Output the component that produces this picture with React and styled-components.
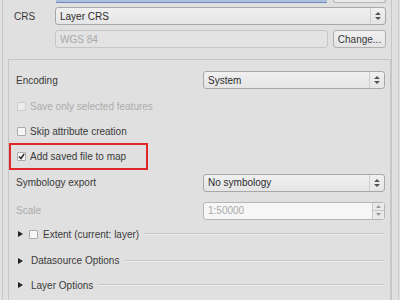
import styled, { createGlobalStyle } from "styled-components";

const GlobalStyle = createGlobalStyle`
  body {
    margin: 0;
    background: #e0e0e0;
    font-family: "Liberation Sans", Arial, sans-serif;
    font-size: 10px;
    color: #333;
  }
`;

const Page = styled.div`
  display: flex;
  width: 400px;
  height: 300px;
  overflow: hidden;
  background: #e0e0e0;
`;

const Frame = styled.div`
  display: flex;
  flex-direction: column;
  width: 388px;
  margin-left: 2px;
  border-left: 1px solid #c6c6c6;
  border-right: 1px solid #c6c6c6;
`;

const OuterEdge = styled.div`
  width: 1px;
  margin-left: 6px;
  background: #cbcbcb;
`;

const TopStrip = styled.div`
  display: flex;
  gap: 6px;
  height: 3px;
  padding-left: 53px;
`;

const FocusedFieldEnd = styled.div`
  width: 271px;
  background: #aebfdd;
  border-bottom: 1px solid #6e8cc2;
`;

const ButtonEnd = styled.div`
  width: 51px;
  background: #e9e9e9;
  border: 1px solid #b3b3b3;
  border-top: none;
  border-radius: 0 0 3px 3px;
`;

const FormRow = styled.div`
  display: flex;
  align-items: center;
  height: 18px;
  margin-top: ${(p) => p.$top}px;
  padding-left: ${(p) => p.$indent || 0}px;
`;

const SideLabel = styled.div`
  width: 41px;
  padding-left: 11px;
  color: #3a3a3a;
`;

const Combo = styled.div`
  display: flex;
  align-items: stretch;
  box-sizing: border-box;
  width: ${(p) => p.$width}px;
  height: 18px;
  border: 1px solid #a8a8a8;
  border-radius: 3px;
  background: linear-gradient(#f0f0f0, #e5e5e5);
  color: #2b2b2b;
`;

const ComboText = styled.div`
  flex: 1;
  display: flex;
  align-items: center;
  padding-left: 4px;
`;

const ComboArrow = styled.div`
  display: flex;
  align-items: center;
  justify-content: center;
  width: 14px;
  border-left: 1px solid #cfcfcf;
`;

const Field = styled.div`
  display: flex;
  align-items: center;
  box-sizing: border-box;
  width: ${(p) => p.$width}px;
  height: 18px;
  padding-left: 4px;
  border: 1px solid #c6c6c6;
  border-radius: 3px;
  background: ${(p) => (p.$light ? "#f6f6f6" : "#e3e3e3")};
  color: #a9a9a9;
`;

const Button = styled.div`
  display: flex;
  align-items: center;
  justify-content: center;
  box-sizing: border-box;
  width: 53px;
  height: 18px;
  margin-left: 5px;
  border: 1px solid #b0b0b0;
  border-radius: 3px;
  background: linear-gradient(#f0f0f0, #e4e4e4);
  color: #3a3a3a;
`;

const Group = styled.div`
  flex: 1;
  margin-top: 11px;
  margin-left: 5px;
  padding-top: 7px;
  border-left: 1px solid #c6c6c6;
  border-top: 1px solid #c6c6c6;
  border-right: 1px solid #c6c6c6;
`;

const GridRow = styled.div`
  display: grid;
  grid-template-columns: 194px 182px;
  align-items: center;
  height: ${(p) => p.$h}px;
`;

const GridLabel = styled.div`
  padding-left: 7px;
  color: ${(p) => (p.$disabled ? "#acacac" : "#3a3a3a")};
`;

const CheckRow = styled.div`
  display: flex;
  align-items: center;
  gap: 4px;
  height: ${(p) => p.$h}px;
  padding-left: 8px;
  color: ${(p) => (p.$disabled ? "#acacac" : "#3a3a3a")};
`;

const Highlight = styled.div`
  display: flex;
  align-items: center;
  gap: 4px;
  box-sizing: border-box;
  width: 139px;
  height: 27px;
  margin-top: -1px;
  padding-left: 6px;
  border: 2px solid #e0282a;
  color: #3a3a3a;
`;

const Box = styled.div`
  display: flex;
  align-items: center;
  justify-content: center;
  box-sizing: border-box;
  width: 9px;
  height: 9px;
  border: 1px solid ${(p) => (p.$disabled ? "#cdcdcd" : "#ababab")};
  border-radius: 1px;
  background: ${(p) => (p.$disabled ? "#ececec" : "#f7f7f7")};
`;

const Spin = styled.div`
  display: flex;
  box-sizing: border-box;
  width: 182px;
  height: 18px;
  border: 1px solid #b5b5b5;
  border-radius: 3px;
  background: #f6f6f6;
  color: #a9a9a9;
`;

const SpinText = styled.div`
  flex: 1;
  display: flex;
  align-items: center;
  padding-left: 4px;
`;

const SpinButtons = styled.div`
  display: flex;
  flex-direction: column;
  width: 11px;
  border-left: 1px solid #c8c8c8;
`;

const SpinButton = styled.div`
  flex: 1;
  display: flex;
  align-items: center;
  justify-content: center;
  background: #e9e9e9;
  & + & {
    border-top: 1px solid #c8c8c8;
  }
`;

const Section = styled.div`
  display: flex;
  align-items: center;
  height: ${(p) => p.$h}px;
  padding-left: 9px;
  padding-right: 5px;
  color: #3a3a3a;
`;

const Triangle = styled.div`
  width: 0;
  height: 0;
  margin-right: ${(p) => p.$gap}px;
  border-top: 3.5px solid transparent;
  border-bottom: 3.5px solid transparent;
  border-left: 5px solid #222;
`;

const SectionTitle = styled.div`
  margin-left: ${(p) => p.$gap || 0}px;
  white-space: nowrap;
`;

const Rule = styled.div`
  flex: 1;
  margin-left: 5px;
  border-top: 1px solid #c6c6c6;
  border-bottom: 1px solid #efefef;
`;

function Arrows() {
  return (
    <svg width="6" height="10" viewBox="0 0 6 10">
      <path d="M0 4 L3 1 L6 4 Z M0 6 L3 9 L6 6 Z" fill="#555" />
    </svg>
  );
}

function Check() {
  return (
    <svg width="7" height="7" viewBox="0 0 7 7">
      <path d="M1 3.5 L3 5.5 L6.2 0.8" stroke="#222" strokeWidth="1.5" fill="none" />
    </svg>
  );
}

function ComboBox({ width, children }) {
  return (
    <Combo $width={width}>
      <ComboText>{children}</ComboText>
      <ComboArrow>
        <Arrows />
      </ComboArrow>
    </Combo>
  );
}

export default function App() {
  return (
    <Page>
      <GlobalStyle />
      <Frame>
        <TopStrip>
          <FocusedFieldEnd />
          <ButtonEnd />
        </TopStrip>
        <FormRow $top={4}>
          <SideLabel>CRS</SideLabel>
          <ComboBox width={331}>Layer CRS</ComboBox>
        </FormRow>
        <FormRow $top={5} $indent={52}>
          <Field $width={273}>WGS 84</Field>
          <Button>Change...</Button>
        </FormRow>
        <Group>
          <GridRow $h={26}>
            <GridLabel>Encoding</GridLabel>
            <ComboBox width={182}>System</ComboBox>
          </GridRow>
          <CheckRow $h={26} $disabled>
            <Box $disabled />
            Save only selected features
          </CheckRow>
          <CheckRow $h={25}>
            <Box />
            Skip attribute creation
          </CheckRow>
          <Highlight>
            <Box>
              <Check />
            </Box>
            Add saved file to map
          </Highlight>
          <GridRow $h={25}>
            <GridLabel>Symbology export</GridLabel>
            <ComboBox width={182}>No symbology</ComboBox>
          </GridRow>
          <GridRow $h={31}>
            <GridLabel $disabled>Scale</GridLabel>
            <Spin>
              <SpinText>1:50000</SpinText>
              <SpinButtons>
                <SpinButton>
                  <svg width="5" height="3" viewBox="0 0 5 3">
                    <path d="M0 3 L2.5 0 L5 3 Z" fill="#9a9a9a" />
                  </svg>
                </SpinButton>
                <SpinButton>
                  <svg width="5" height="3" viewBox="0 0 5 3">
                    <path d="M0 0 L2.5 3 L5 0 Z" fill="#9a9a9a" />
                  </svg>
                </SpinButton>
              </SpinButtons>
            </Spin>
          </GridRow>
          <Section $h={16}>
            <Triangle $gap={6} />
            <Box />
            <SectionTitle $gap={5}>Extent (current: layer)</SectionTitle>
            <Rule />
          </Section>
          <Section $h={37}>
            <Triangle $gap={8} />
            <SectionTitle>Datasource Options</SectionTitle>
            <Rule />
          </Section>
          <Section $h={12}>
            <Triangle $gap={8} />
            <SectionTitle>Layer Options</SectionTitle>
            <Rule />
          </Section>
        </Group>
      </Frame>
      <OuterEdge />
    </Page>
  );
}
